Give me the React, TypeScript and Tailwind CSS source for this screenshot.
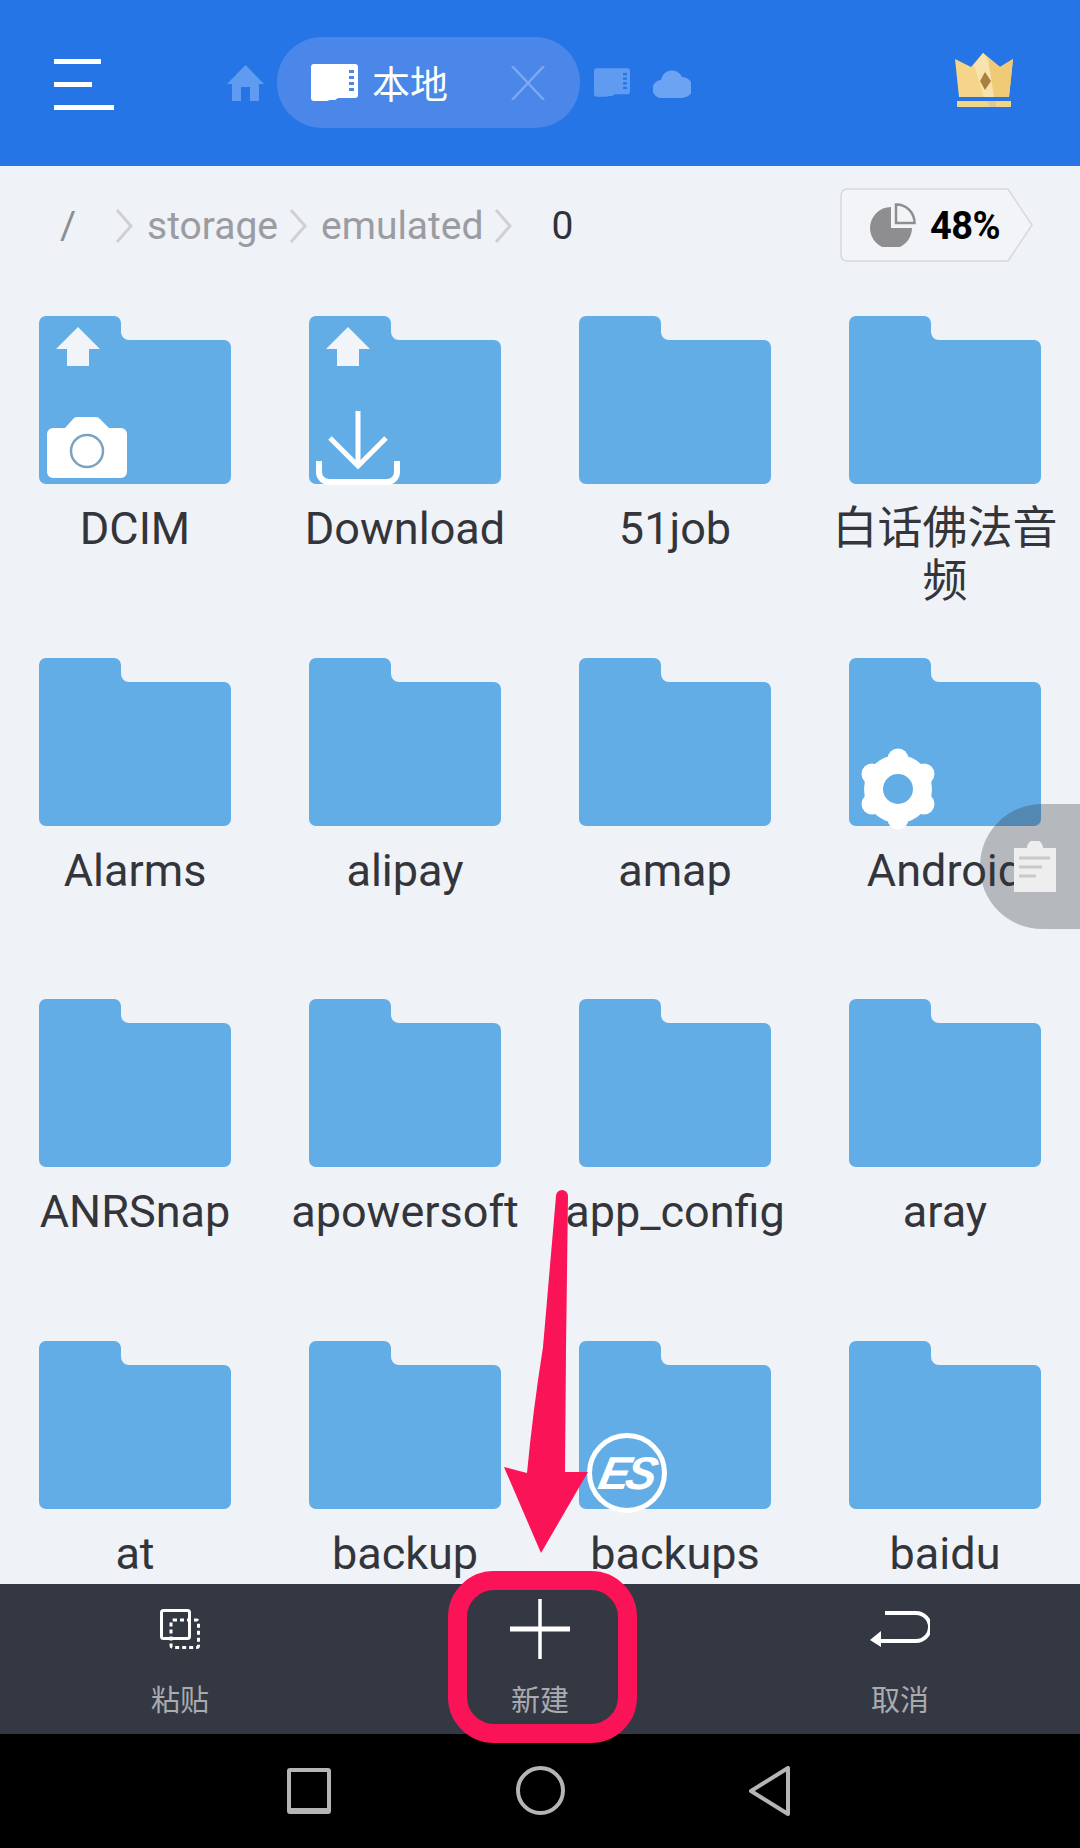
import type { ReactNode } from "react";

const FolderShape = () => (
  <svg viewBox="0 0 192 168" className="w-[192px] h-[168px] block">
    <path d="M7 0H75a7 7 0 0 1 7 7V16a8 8 0 0 0 8 8H185a7 7 0 0 1 7 7V161a7 7 0 0 1-7 7H7a7 7 0 0 1-7-7V7a7 7 0 0 1 7-7Z" fill="#62ade6" />
  </svg>
);

const UpArrow = () => (
  <svg viewBox="0 0 192 168" className="absolute inset-0 w-[192px] h-[168px]">
    <path d="M39 11L61 33H50V50H28V33H17Z" fill="#f1f4f8" />
  </svg>
);

const CameraBadge = () => (
  <svg viewBox="0 0 192 168" className="absolute inset-0 w-[192px] h-[168px]">
    <path d="M14 112H26L34 103a6 6 0 0 1 4-2H57a6 6 0 0 1 4 2L70 112H82a6 6 0 0 1 6 6V156a6 6 0 0 1-6 6H14a6 6 0 0 1-6-6V118a6 6 0 0 1 6-6Z" fill="#fff" />
    <circle cx="48" cy="135" r="16" fill="#fff" stroke="#7ba3c1" strokeWidth="2.5" />
  </svg>
);

const DownloadBadge = () => (
  <svg viewBox="0 0 192 172" className="absolute top-0 left-0 w-[192px] h-[172px]" fill="none" stroke="#fff" strokeWidth="5">
    <path d="M49 95V150" />
    <path d="M21 122L49 150L77 122" />
    <path d="M10 145V156a10 10 0 0 0 10 10H78a10 10 0 0 0 10-10V145" strokeWidth="6" />
  </svg>
);

// six lobes on a round body, pointy side up
const gearLobes = [-90, -30, 30, 90, 150, 210].map((deg) => ({
  x: 49 + 30 * Math.cos((deg * Math.PI) / 180),
  y: 131 + 30 * Math.sin((deg * Math.PI) / 180),
}));

const GearBadge = () => (
  <svg viewBox="0 0 192 180" className="absolute top-0 left-0 w-[192px] h-[180px]">
    <circle cx="49" cy="131" r="34" fill="#fff" />
    {gearLobes.map((p) => (
      <circle key={p.y + p.x} cx={p.x} cy={p.y} r="10.5" fill="#fff" />
    ))}
    <circle cx="49" cy="131" r="15" fill="#62ade6" />
  </svg>
);

const EsBadge = () => (
  <div className="absolute left-[8px] top-[92px] w-[80px] h-[80px] rounded-full border-[5px] border-white flex items-center justify-center">
    <span className="text-white font-bold italic text-[46px] leading-none tracking-[-4px] -skew-x-12 font-['Liberation_Sans',sans-serif]">ES</span>
  </div>
);

const folders: { name: string; badge?: ReactNode }[] = [
  { name: "DCIM", badge: <><UpArrow /><CameraBadge /></> },
  { name: "Download", badge: <><UpArrow /><DownloadBadge /></> },
  { name: "51job" },
  { name: "白话佛法音频" },
  { name: "Alarms" },
  { name: "alipay" },
  { name: "amap" },
  { name: "Android", badge: <GearBadge /> },
  { name: "ANRSnap" },
  { name: "apowersoft" },
  { name: "app_config" },
  { name: "aray" },
  { name: "at" },
  { name: "backup" },
  { name: "backups", badge: <EsBadge /> },
  { name: "baidu" },
];

const Chevron = ({ className }: { className: string }) => (
  <svg viewBox="0 0 18 34" className={`w-[18px] h-[34px] shrink-0 ${className}`} fill="none" stroke="#cfd0d2" strokeWidth="3">
    <path d="M2 1L16 17L2 33" />
  </svg>
);

const SdIcon = ({ className, fill, dot }: { className: string; fill: string; dot: string }) => (
  <svg viewBox="0 0 47 37" className={className}>
    <path d="M3 0H44a3 3 0 0 1 3 3V31a3 3 0 0 1-3 3H27L24 36H19L16 37H3a3 3 0 0 1-3-3V3a3 3 0 0 1 3-3Z" fill={fill} />
    {[6, 12, 18, 24].map((y) => (
      <rect key={y} x="38" y={y} width="5" height="3" fill={dot} />
    ))}
  </svg>
);

function Header() {
  return (
    <div className="h-[166px] shrink-0 bg-[#2575e6] flex items-start pt-[37px]">
      <div className="ml-[54px] mt-[22px] w-[60px] flex flex-col gap-[18px]">
        <div className="h-[5px] w-[47px] bg-white" />
        <div className="h-[5px] w-[38px] bg-white" />
        <div className="h-[5px] w-[60px] bg-white" />
      </div>
      <svg viewBox="0 0 37 36" className="ml-[113px] mt-[28px] w-[37px] h-[36px]">
        <path d="M18.5 0L37 19H32V36H23V22H14V36H5V19H0Z" fill="#5f9bf0" />
      </svg>
      <div className="ml-[13px] w-[303px] h-[91px] rounded-[45px] bg-[#4a87e8] flex items-center pl-[34px]">
        <SdIcon className="w-[47px] h-[37px] shrink-0" fill="#fff" dot="#4a87e8" />
        <span className="ml-[14px] mt-[4px] text-white text-[38px] leading-none">本地</span>
        <svg viewBox="0 0 34 34" className="ml-[63px] w-[34px] h-[34px]" fill="none" stroke="#7ba8f0" strokeWidth="2.5">
          <path d="M1 0L33 34M33 0L1 34" />
        </svg>
      </div>
      <SdIcon className="ml-[14px] mt-[31px] w-[36px] h-[29px]" fill="#5f9bf0" dot="#2575e6" />
      <svg viewBox="0 0 38 30" className="ml-[23px] mt-[31px] w-[38px] h-[30px]">
        <path d="M9 30a9 9 0 0 1-1-18a11 11 0 0 1 21-3a10.500 10.500 0 0 1 0 21Z" fill="#6ca3f2" />
      </svg>
      <svg viewBox="0 0 60 54" className="ml-auto mr-[66px] mt-[16px] w-[60px] h-[54px]">
        <path d="M1 6L17 14L29 0L46 14L59 6L55 44H5Z" fill="#f4d58a" />
        <path d="M29 0L46 14L59 6L55 44H38L28 24Z" fill="#efcb78" />
        <path d="M20 12L29 0L34 6L40 44H30Z" fill="#f8e2ad" />
        <path d="M31 19L37 28L31 37L26 28Z" fill="#a9803c" />
        <path d="M3 48H57V54H3Z" fill="#f3d488" />
        <path d="M33 48H42V54H36Z" fill="#d9c8a0" />
      </svg>
    </div>
  );
}

function PathBar() {
  return (
    <div className="h-[150px] shrink-0 flex items-start pt-[22px]">
      <div className="h-[74px] flex items-center text-[39px] leading-none text-[#9b9c9f] pt-[2px]">
        <span className="ml-[60px] w-[55px] text-[#8d8e91]">/</span>
        <Chevron className="" />
        <span className="ml-[14px]">storage</span>
        <Chevron className="ml-[11px]" />
        <span className="ml-[14px]">emulated</span>
        <Chevron className="ml-[10px]" />
        <span className="ml-[40px] text-[#2f3136]">0</span>
      </div>
      <div className="relative ml-auto mr-[47px] w-[193px] h-[74px] flex items-center">
        <svg viewBox="0 0 193 74" className="absolute inset-0 w-[193px] h-[74px]">
          <path d="M7 1H168L192 37L168 73H7a6 6 0 0 1-6-6V7a6 6 0 0 1 6-6Z" fill="#f2f4f8" stroke="#d6d8dc" strokeWidth="1.500" />
        </svg>
        <svg viewBox="0 0 46 44" className="relative ml-[30px] w-[46px] h-[44px]">
          <path d="M21 4A21 21 0 1 0 42 25H21Z" fill="#8e8e90" />
          <path d="M26 1.500A18 18 0 0 1 44.500 20H26Z" fill="none" stroke="#8e8e90" strokeWidth="2.500" />
        </svg>
        <span className="relative ml-[14px] mt-[2px] text-[38px] font-bold leading-none text-black tracking-[-0.5px]">48%</span>
      </div>
    </div>
  );
}

function FolderGrid() {
  return (
    <div className="flex-1 min-h-0 overflow-hidden grid grid-cols-4 auto-rows-[341.7px]">
      {folders.map((f) => (
        <div key={f.name} className="flex flex-col items-center">
          <div className="relative w-[192px] h-[168px]">
            <FolderShape />
            {f.badge}
          </div>
          <div className="mt-[18px] w-[250px] text-center text-[45px] leading-[53px] text-[#33353a]">{f.name}</div>
        </div>
      ))}
    </div>
  );
}

const BarItem = ({ icon, label }: { icon: ReactNode; label: string }) => (
  <div className="flex flex-col items-center">
    <div className="h-[74px] mt-[8px] flex items-center justify-center">{icon}</div>
    <span className="mt-[20px] text-[29px] leading-[30px] text-[#a9abaf]">{label}</span>
  </div>
);

function BottomBar() {
  return (
    <div className="h-[150px] shrink-0 bg-[#343842] grid grid-cols-3">
      <BarItem
        label="粘贴"
        icon={
          <svg viewBox="0 0 40 40" className="w-[40px] h-[40px]" fill="none" stroke="#fff" strokeWidth="3">
            <rect x="1.500" y="1.500" width="28" height="28" rx="2" />
            <rect x="11" y="11" width="27.500" height="27.500" rx="2" strokeDasharray="4 3" />
          </svg>
        }
      />
      <BarItem
        label="新建"
        icon={
          <svg viewBox="0 0 60 60" className="w-[60px] h-[60px]" fill="none" stroke="#fff">
            <path d="M30 0V60" strokeWidth="3.500" />
            <path d="M0 30H60" strokeWidth="5" />
          </svg>
        }
      />
      <BarItem
        label="取消"
        icon={
          <svg viewBox="0 0 60 36" className="w-[60px] h-[36px]" fill="none">
            <path d="M15 2H46a14 14 0 0 1 0 28H10" stroke="#fff" strokeWidth="4" />
            <path d="M0 29L11 20V36Z" fill="#fff" />
          </svg>
        }
      />
    </div>
  );
}

function NavBar() {
  return (
    <div className="h-[114px] shrink-0 bg-black flex items-center justify-center pb-[1px] pr-[4px]">
      <div className="w-[44px] h-[46px] border-[4px] border-[#b5b5b5] rounded-[3px] border-b-[6px]" />
      <div className="ml-[185px] w-[49px] h-[49px] rounded-full border-[4px] border-[#b5b5b5]" />
      <svg viewBox="0 0 41 50" className="ml-[184px] w-[41px] h-[50px]" fill="none" stroke="#b5b5b5" strokeWidth="4" strokeLinejoin="round">
        <path d="M39 2V48L2 25Z" />
      </svg>
    </div>
  );
}

export default function App() {
  return (
    <div className="relative w-[1080px] h-[1848px] overflow-hidden flex flex-col bg-[#eff2f7] font-['Roboto','Noto_Sans_CJK_SC',sans-serif]">
      <Header />
      <PathBar />
      <FolderGrid />
      <BottomBar />
      <NavBar />

      {/* floating clipboard button */}
      <div className="absolute left-[980px] top-[804px] w-[100px] h-[125px] rounded-l-[62px] bg-[#30343a]/30 flex items-center pl-[34px]">
        <svg viewBox="0 0 42 51" className="w-[42px] h-[51px]">
          <path d="M0 7H13a8 8 0 0 1 16 0H42V51H0Z" fill="#eeeeee" />
          <path d="M5 17H36M5 26H28M5 35H22" stroke="#c9c9c9" strokeWidth="3" />
        </svg>
      </div>

      {/* annotation: arrow + highlight box */}
      <svg viewBox="0 0 100 370" className="absolute left-[495px] top-[1190px] w-[100px] h-[370px]">
        <path
          d="M61 6a6 6 0 0 1 12 0L71 160L70 282L93 282L46 363L9 277L32 283Q38 220 48 157Z"
          fill="#fb1357"
        />
      </svg>
      <div className="absolute left-[448px] top-[1571px] w-[189px] h-[172px] border-[19px] border-[#fb1357] rounded-[46px]" />
    </div>
  );
}
